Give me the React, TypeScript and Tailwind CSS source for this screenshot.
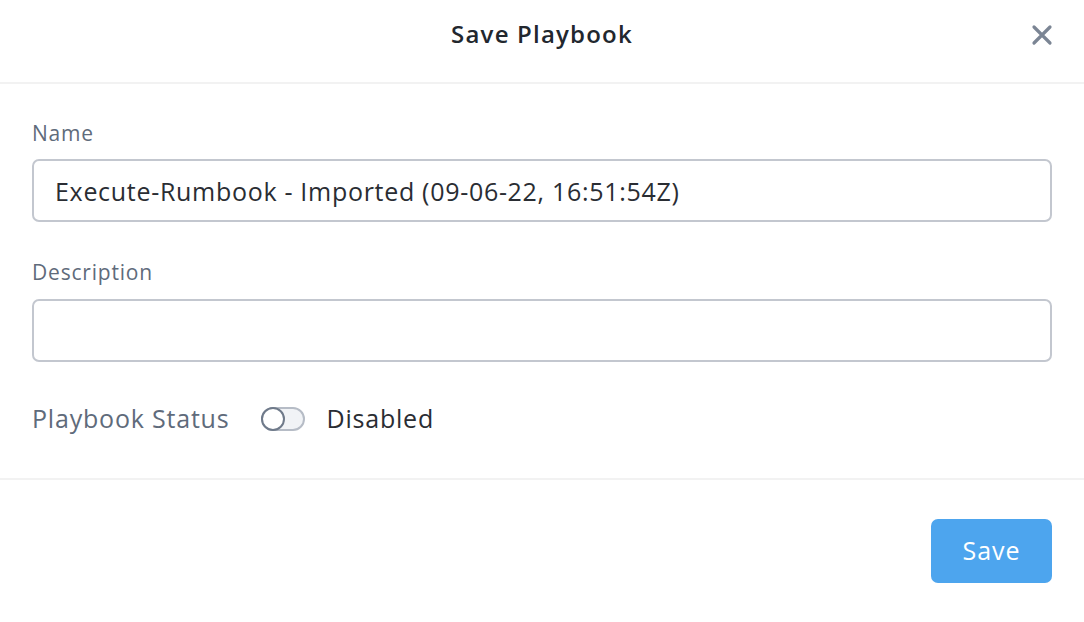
import { useState } from 'react';

export default function App() {
  const [name, setName] = useState('Execute-Rumbook - Imported (09-06-22, 16:51:54Z)');
  const [description, setDescription] = useState('');
  const [enabled, setEnabled] = useState(false);

  return (
    <div className="w-[1084px] h-[622px] bg-white font-['Open_Sans','Liberation_Sans',sans-serif]">
      <div className="relative h-[84px] flex justify-center pt-[18px] border-b-2 border-[#f2f2f2]">
        <h1 className="text-[24px] leading-[32px] font-semibold tracking-[1.2px] text-[#22272e]">Save Playbook</h1>
        <button className="absolute right-[31px] top-[24px] w-[22px] h-[22px] flex items-center justify-center">
          <svg width="22" height="22" viewBox="0 0 22 22">
            <path d="M3 3 L19 19 M19 3 L3 19" stroke="#7b8594" strokeWidth="3.2" strokeLinecap="round" />
          </svg>
        </button>
      </div>

      <div className="px-[32px] pt-[36px] pb-[43px] border-b-2 border-[#f2f2f2]">
        <label className="block text-[21px] leading-[26px] tracking-[0.8px] text-[#5f6b7b]">Name</label>
        <input
          value={name}
          onChange={(e) => setName(e.target.value)}
          className="mt-[13px] w-full h-[63px] rounded-[7px] border-2 border-[#c3c7cf] px-[21px] text-[25px] tracking-[0.7px] text-[#2a2d33] outline-none"
        />

        <label className="block mt-[37px] text-[21px] leading-[26px] tracking-[0.8px] text-[#5f6b7b]">Description</label>
        <input
          value={description}
          onChange={(e) => setDescription(e.target.value)}
          className="mt-[14px] w-full h-[63px] rounded-[7px] border-2 border-[#c3c7cf] px-[21px] text-[25px] tracking-[0.7px] text-[#2a2d33] outline-none"
        />

        <div className="mt-[41px] flex items-center h-[32px]">
          <span className="text-[25px] tracking-[0.8px] text-[#5f6b7b]">Playbook Status</span>
          <button
            onClick={() => setEnabled(!enabled)}
            className="relative ml-[32px] w-[44px] h-[24px] rounded-full border-2 border-[#b6bcc6] bg-[#f1f3f6]"
          >
            <span className="absolute left-[-2px] top-[-2px] w-[24px] h-[24px] rounded-full border-2 border-[#6f7a8a] bg-white" />
          </button>
          <span className="ml-[21px] text-[25px] tracking-[0.8px] text-[#2a2d33]">{enabled ? 'Enabled' : 'Disabled'}</span>
        </div>
      </div>

      <div className="flex justify-end px-[32px] pt-[39px]">
        <button className="w-[121px] h-[64px] rounded-[7px] bg-[#4da5ee] text-white text-[25px] tracking-[1px]">Save</button>
      </div>
    </div>
  );
}
